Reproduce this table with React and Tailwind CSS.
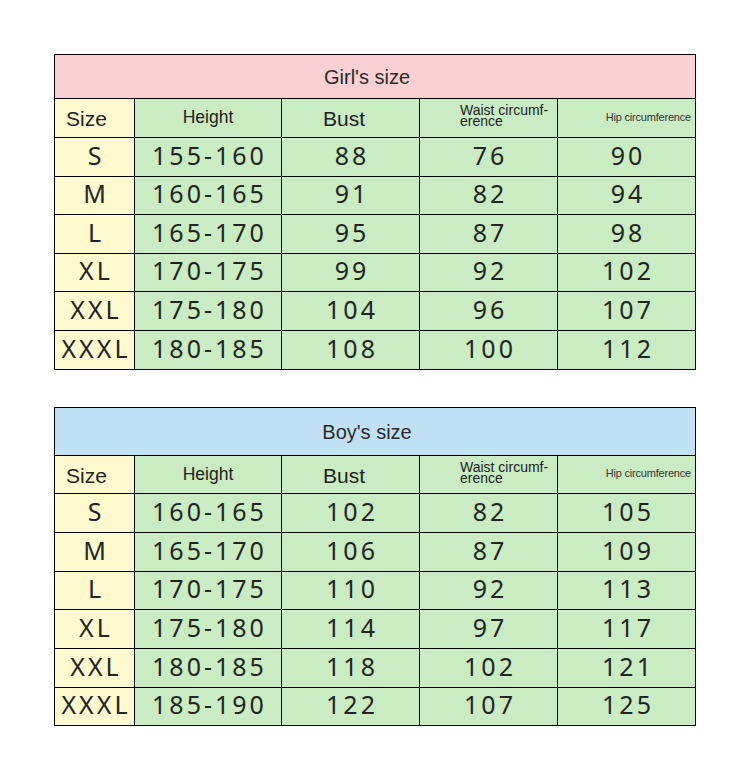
import React from 'react';

const girls = {
    title: "Girl's size",
    titleBg: 'bg-[#f8d0d4]',
    titleH: 'h-[44px]',
    headH: 'h-[39px]',
    rowH: ['h-[39px]', 'h-[38px]', 'h-[39px]', 'h-[38px]', 'h-[39px]', 'h-[39px]'],
    rows: [
        ['S', '155-160', '88', '76', '90'],
        ['M', '160-165', '91', '82', '94'],
        ['L', '165-170', '95', '87', '98'],
        ['XL', '170-175', '99', '92', '102'],
        ['XXL', '175-180', '104', '96', '107'],
        ['XXXL', '180-185', '108', '100', '112'],
    ],
};

const boys = {
    title: "Boy's size",
    titleBg: 'bg-[#c0e0f3]',
    titleH: 'h-[48px]',
    headH: 'h-[38px]',
    rowH: ['h-[39px]', 'h-[39px]', 'h-[38px]', 'h-[39px]', 'h-[39px]', 'h-[38px]'],
    rows: [
        ['S', '160-165', '102', '82', '105'],
        ['M', '165-170', '106', '87', '109'],
        ['L', '170-175', '110', '92', '113'],
        ['XL', '175-180', '114', '97', '117'],
        ['XXL', '180-185', '118', '102', '121'],
        ['XXXL', '185-190', '122', '107', '125'],
    ],
};

const cell = 'border-r border-b border-black';
const green = 'bg-[#c9ecc2]';
const yellow = 'bg-[#fef9cf]';
const arial = "font-['Liberation_Sans',Arial,sans-serif]";

function SizeTable({ data }) {
    return (
        <div className="grid grid-cols-[80px_147px_138px_138px_138px] border-l border-t border-black w-[642px]">
            <div className={`col-span-5 ${cell} ${data.titleBg} ${data.titleH} flex items-center justify-center pr-4 text-[20px] text-[#2a2a2a] ${arial}`}>
                {data.title}
            </div>

            <div className={`${cell} ${yellow} ${data.headH} flex items-center pl-[11px] pt-[2px] text-[21px] text-[#222] ${arial}`}>Size</div>
            <div className={`${cell} ${green} ${data.headH} flex items-center justify-center pb-[1px] text-[17.5px] text-[#222] ${arial}`}>Height</div>
            <div className={`${cell} ${green} ${data.headH} flex items-center justify-center pr-[13px] pt-[2px] text-[21px] text-[#222] ${arial}`}>Bust</div>
            <div className={`${cell} ${green} ${data.headH} flex flex-col items-start pl-[40px] pt-[6px] text-[14px] leading-[10.5px] text-[#222] ${arial}`}>
                <span>Waist circumf-</span>
                <span>erence</span>
            </div>
            <div className={`${cell} ${green} ${data.headH} flex items-center justify-end pr-[4px] pb-[2px] text-[11px] tracking-[-0.2px] text-[#333] ${arial}`}>Hip circumference</div>

            {data.rows.map((r, i) => (
                <React.Fragment key={i}>
                    {r.map((v, j) => (
                        <div
                            key={j}
                            className={`${cell} ${j === 0 ? yellow : green} ${data.rowH[i]} flex items-center justify-center pl-[3px] pb-[3px] text-[25px] tracking-[3px] text-[#1f261f] font-['Noto_Sans',sans-serif]`}
                        >
                            {v}
                        </div>
                    ))}
                </React.Fragment>
            ))}
        </div>
    );
}

export default function App() {
    return (
        <div className="w-[750px] h-[759px] bg-white pt-[54px] pl-[54px] flex flex-col gap-[37px]">
            <SizeTable data={girls} />
            <SizeTable data={boys} />
        </div>
    );
}
